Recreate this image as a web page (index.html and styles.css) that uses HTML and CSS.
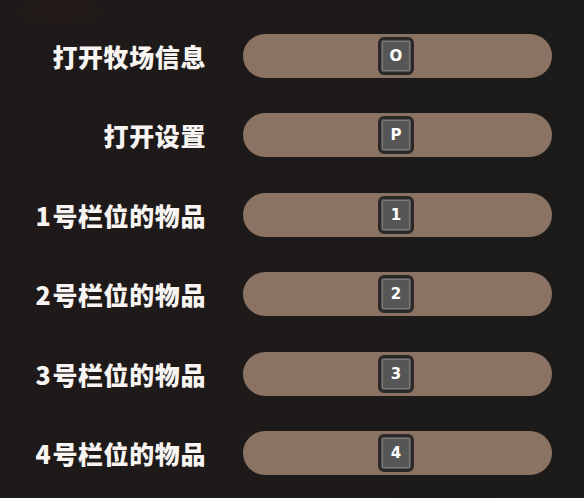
FILE: index.html
```html
<!DOCTYPE html>
<html lang="zh-CN">
<head>
<meta charset="utf-8">
<title>按键设置</title>
<link rel="stylesheet" href="styles.css">
</head>
<body>
<div class="bindings">
  <div class="label">打开牧场信息</div>
  <div class="bar"><span class="key">O</span></div>
  <div class="label">打开设置</div>
  <div class="bar"><span class="key">P</span></div>
  <div class="label"><span class="num">1</span>号栏位的物品</div>
  <div class="bar"><span class="key">1</span></div>
  <div class="label"><span class="num">2</span>号栏位的物品</div>
  <div class="bar"><span class="key">2</span></div>
  <div class="label"><span class="num">3</span>号栏位的物品</div>
  <div class="bar"><span class="key">3</span></div>
  <div class="label"><span class="num">4</span>号栏位的物品</div>
  <div class="bar"><span class="key">4</span></div>
</div>
</body>
</html>
```
FILE: styles.css
```css
html, body {
  margin: 0;
  padding: 0;
}
body {
  width: 584px;
  height: 498px;
  overflow: hidden;
  background-color: #1d1a19;
  background-image:
    radial-gradient(ellipse 60px 22px at 62px 10px, rgba(60, 28, 26, 0.25), transparent 75%),
    linear-gradient(90deg, #1f1a19 0%, #1d1a19 50%, #1c1b1a 100%);
  font-family: "Noto Sans CJK SC", "Noto Sans", sans-serif;
}
.bindings {
  display: grid;
  grid-template-columns: 206px 309px;
  grid-auto-rows: 44px;
  column-gap: 37px;
  row-gap: 35.4px;
  padding-top: 34px;
}
.label {
  display: flex;
  align-items: center;
  justify-content: flex-end;
  color: #f7f4f1;
  font-size: 25px;
  font-weight: 900;
  letter-spacing: 0.6px;
  white-space: nowrap;
}
.num {
  margin-right: 1px;
}
.bar {
  display: flex;
  align-items: center;
  justify-content: center;
  background: #8a7363;
  border-radius: 22px;
}
.key {
  box-sizing: border-box;
  width: 36px;
  height: 38px;
  display: flex;
  align-items: center;
  justify-content: center;
  background: #575656;
  border: 3px solid #2a2928;
  border-radius: 6px;
  box-shadow: inset 0 0 0 1px #575656, inset 0 0 0 2px #7d7b7a;
  color: #ffffff;
  font-family: "DejaVu Sans", sans-serif;
  font-weight: 700;
  font-size: 15px;
  margin-left: -3px;
}
```
